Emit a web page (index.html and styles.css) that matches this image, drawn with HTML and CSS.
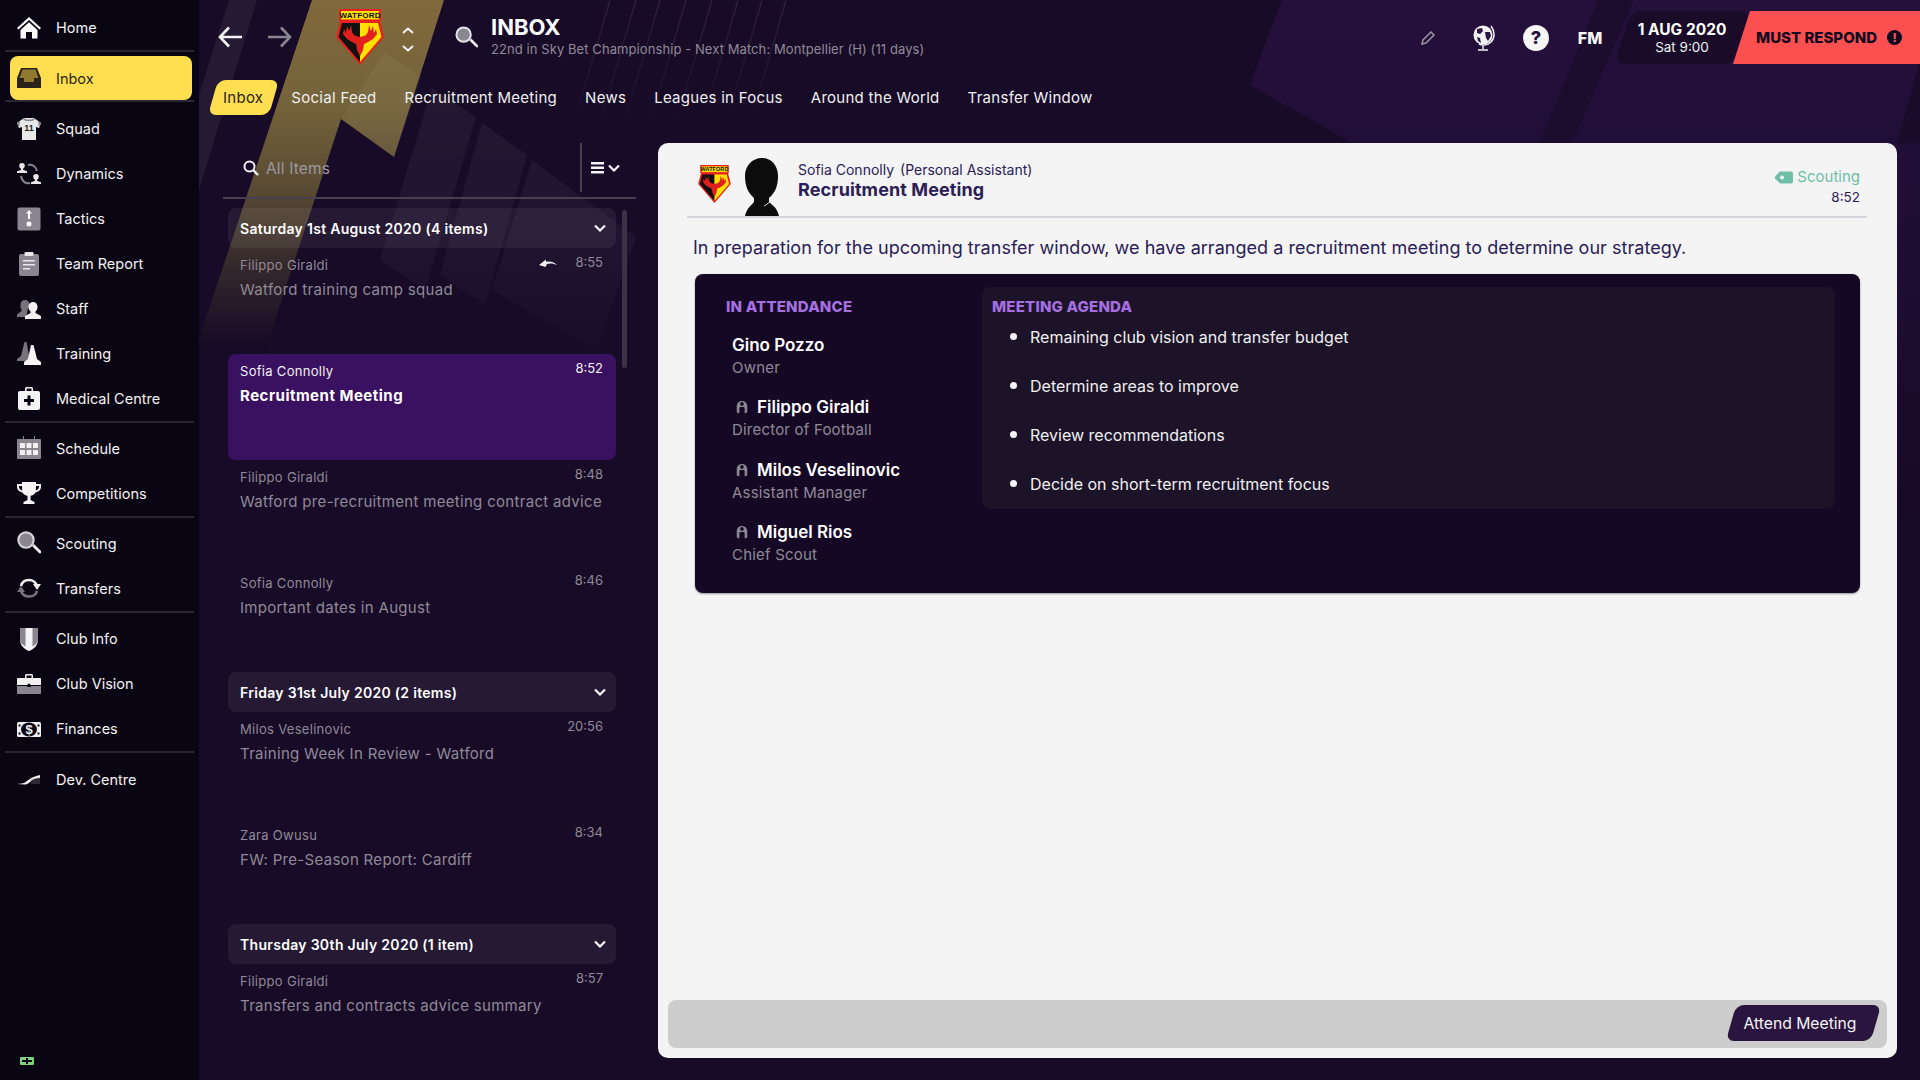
FILE: index.html
```html
<!DOCTYPE html>
<html lang="en">
<head>
<meta charset="utf-8">
<title>Inbox</title>
<link rel="stylesheet" href="styles.css">
</head>
<body>
<svg width="0" height="0" class="defs">
  <defs>
    <g id="crest">
      <path d="M3 0h42v12h-1l4 16-24 28L0 28l4-16H3z" fill="#e8201f"/>
      <rect x="5" y="2" width="38" height="8.500" fill="#ffe000"/>
      <text x="24" y="9.200" text-anchor="middle" class="crest-text">WATFORD</text>
      <path d="M24 14H6L2.500 28 24 53z" fill="#111"/>
      <path d="M24 14h18l3.500 14L24 53z" fill="#ffe000"/>
      <path d="M24 47L21 41 20 35 16 33 11 30 7 25 8 20 10 24 11 17 13 22 15 16 16 23 18 26 20 27 24 28 28 27 30 26 32 23 33 16 35 22 37 17 38 24 40 20 41 25 37 30 32 33 28 35 27 41z" fill="#e0201c"/>
    </g>
    <path id="person" d="M8 1c3.500 0 6 2.500 6 6v6c0 1-1 2-2 2h-1V9.500c0-1-.7-1.500-1.500-1.500h-3C5.700 8 5 8.500 5 9.500V15H4c-1 0-2-1-2-2V7c0-3.500 2.500-6 6-6zM6 4.500c0 1.200.9 2.200 2 2.200s2-1 2-2.200-.9-2.200-2-2.200-2 1-2 2.200z"/>
  </defs>
</svg>

<svg class="bg" viewBox="0 0 1920 1080" preserveAspectRatio="none">
  <defs>
    <linearGradient id="gold" gradientUnits="userSpaceOnUse" x1="0" y1="0" x2="0" y2="345">
      <stop offset="0" stop-color="#80693c"/>
      <stop offset=".3" stop-color="#75633a"/>
      <stop offset=".55" stop-color="#594a33"/>
      <stop offset=".75" stop-color="#382b2c"/>
      <stop offset="1" stop-color="#170a26"/>
    </linearGradient>
    <linearGradient id="fade" gradientUnits="userSpaceOnUse" x1="0" y1="80" x2="0" y2="380">
      <stop offset="0" stop-color="#fff" stop-opacity=".05"/>
      <stop offset=".55" stop-color="#fff" stop-opacity=".035"/>
      <stop offset="1" stop-color="#fff" stop-opacity="0"/>
    </linearGradient>
    <linearGradient id="glow" gradientUnits="userSpaceOnUse" x1="0" y1="0" x2="0" y2="520">
      <stop offset="0" stop-color="#25103c"/>
      <stop offset=".3" stop-color="#210e36"/>
      <stop offset="1" stop-color="#170a26"/>
    </linearGradient>
    <linearGradient id="lines" gradientUnits="userSpaceOnUse" x1="0" y1="0" x2="0" y2="130">
      <stop offset="0" stop-color="#36263f" stop-opacity=".9"/>
      <stop offset="1" stop-color="#36263f" stop-opacity="0"/>
    </linearGradient>
  </defs>
  <rect width="1920" height="1080" fill="#180b28"/>
  <path d="M1282 0H1920V520H1600L1352 143 1250 85z" fill="url(#glow)"/>
  <path d="M1598 0H1634L1572 143 1540 143z" fill="#1c0c2e"/>
  <path d="M1920 60V143H1897z" fill="#1a0b2a"/>
  <path d="M229 0H257L199 190V95z" fill="#fff" opacity=".06"/>
  <path d="M312 0H444L394 157 341 119 262 360H192z" fill="url(#gold)"/>
  <path d="M384 52L422 77 394 157 341 119z" fill="#fff" opacity=".04"/>
  <path d="M432 88L476 117 425 290 380 260z" fill="url(#fade)"/>
  <path d="M482 123L527 155 485 305 440 275z" fill="url(#fade)"/>
  <path d="M532 160L636 237 596 350 492 290z" fill="url(#fade)"/>
  <path stroke="url(#lines)" stroke-width="1.200" fill="none" d="M610 0L572 130M636 0L598 130M660 0L622 130M686 0L648 130M712 0L674 130M738 0L700 130M762 0L724 130M786 0L748 130"/>
</svg>

<div class="app">
  <aside class="sidebar">
    <div class="nav-group nav-home">
      <a class="nav-item"><svg class="ni" viewBox="0 0 24 24"><path fill="#fff" d="M12 1L0 12l1.500 1.500L12 4l10.500 9.500L24 12zM3.500 14L12 6.200 20.500 14v8.500h-5.500v-6.500H9v6.500H3.500z"/></svg><span>Home</span></a>
    </div>
    <div class="nav-group nav-inbox">
      <a class="nav-item active"><svg class="ni" viewBox="0 0 24 24"><path fill="#2a2418" d="M4 2h16l4 10v10H0V12z"/><path fill="#8f7a30" d="M5.500 3.500h13L21.500 12H17v4H7v-4H2.500z"/></svg><span>Inbox</span></a>
    </div>
    <div class="nav-group nav-squad">
      <a class="nav-item"><svg class="ni" viewBox="0 0 24 24"><path fill="#e8e8e8" d="M7 1h10l7 5-2 5-3-1v13H5V10l-3 1-2-5z"/><path fill="#8a8690" d="M7 1c1 2 9 2 10 0l1 1c-1 3-11 3-12 0zM0 6l3-2-1 7zM24 6l-3-2 1 7z"/><text x="12" y="14" text-anchor="middle" class="shirt-text">11</text></svg><span>Squad</span></a>
      <a class="nav-item"><svg class="ni" viewBox="0 0 24 24"><path fill="#e8e8e8" d="M5 1a2.800 2.800 0 012.800 2.800c0 1.500-1 2.700-1.800 3v1l4 1.500v1.700H0v-1.700L4 8V6.800c-.8-.3-1.800-1.500-1.800-3A2.800 2.800 0 015 1zM19 12a2.800 2.800 0 012.800 2.800c0 1.500-1 2.700-1.800 3v1l4 1.500V22H14v-1.700l4-1.500v-1c-.8-.3-1.800-1.500-1.800-3A2.800 2.800 0 0119 12z"/><path fill="none" stroke="#8a8690" stroke-width="2" d="M11 3c4-1 8 1 9 6M13 21c-4 1-8-1-9-7"/></svg><span>Dynamics</span></a>
      <a class="nav-item"><svg class="ni" viewBox="0 0 24 24"><rect width="23" height="23" x=".5" y=".5" rx="2" fill="#8a8690"/><path fill="#fff" d="M12 3l3 3.500h-2V12h-2V6.500H9zM12 14.500a2.500 2.500 0 110 5 2.500 2.500 0 010-5z"/></svg><span>Tactics</span></a>
      <a class="nav-item"><svg class="ni" viewBox="0 0 24 24"><rect width="20" height="22" x="2" y="2" rx="2" fill="#8a8690"/><rect x="7.500" y="0" width="9" height="4" rx="1" fill="#e8e8e8"/><path fill="#e8e8e8" d="M6 8h12v1.600H6zM6 12h12v1.600H6zM6 16h7v1.600H6z"/></svg><span>Team Report</span></a>
      <a class="nav-item"><svg class="ni" viewBox="0 0 24 24"><path fill="#77737d" d="M8 3a4.500 4.500 0 014.500 5c0 2-1 3.500-2 4.500v1.500L9 20H0v-2.500L4.500 14v-1.500C3.500 11.500 3.500 10 3.500 8A4.500 4.500 0 018 3z"/><path fill="#f0f0f0" d="M16 5a4.500 4.500 0 014.500 5c0 2-1 3.500-2 4.500V16l5.500 3v3H8v-3l5.500-3v-1.500c-1-1-2-2.500-2-4.500A4.500 4.500 0 0116 5z"/></svg><span>Staff</span></a>
      <a class="nav-item"><svg class="ni" viewBox="0 0 24 24"><path fill="#77737d" d="M7.500 0h2L13 19H0v-2l4-3z"/><path fill="#f4f4f4" d="M14 3h2.500L20 17l4 3v3H7v-3l4-3z"/></svg><span>Training</span></a>
      <a class="nav-item"><svg class="ni" viewBox="0 0 24 24"><path fill="#f4f4f4" d="M8 4V1.500C8 .7 8.700 0 9.500 0h5c.8 0 1.500.7 1.500 1.500V4h5c1.200 0 2 .8 2 2v15c0 1.200-.8 2-2 2H3c-1.200 0-2-.8-2-2V6c0-1.200.8-2 2-2zm1.500 0h5V1.500h-5z"/><path fill="#0a0512" d="M10.500 8.500h3v3.500H17v3h-3.500v3.500h-3V15H7v-3h3.500z"/></svg><span>Medical Centre</span></a>
    </div>
    <div class="nav-group">
      <a class="nav-item"><svg class="ni" viewBox="0 0 24 24"><path fill="#8a8690" d="M1 3h5V0h1v3h10V0h1v3h5c.5 0 1 .5 1 1v18c0 .5-.5 1-1 1H1c-.5 0-1-.5-1-1V4c0-.5.5-1 1-1z"/><path fill="#f0f0f0" d="M3 7h5v5H3zM9.500 7h5v5h-5zM16 7h5v5h-5zM3 14h5v5H3zM9.500 14h5v5h-5zM16 14h5v5h-5z"/></svg><span>Schedule</span></a>
      <a class="nav-item"><svg class="ni" viewBox="0 0 24 24"><path fill="#f4f4f4" d="M5 1h14v2h5v3c0 3-3 5-5.500 5.500-1 1.800-3 3-5 3.300V19l4 2v2H6.500v-2l4-2v-4.200c-2-.3-4-1.500-5-3.300C3 11 0 9 0 6V3h5zM2 5v1c0 1.700 1.500 3 3.200 3.500L5 5zm20 0h-3l-.2 4.500C20.500 9 22 7.700 22 6z"/></svg><span>Competitions</span></a>
    </div>
    <div class="nav-group">
      <a class="nav-item"><svg class="ni" viewBox="0 0 24 24"><path fill="#f0f0f0" d="M15 15l2-2 7 7c.5.6.5 1.500 0 2s-1.500.5-2 0z"/><circle cx="9" cy="9" r="7.700" fill="#8a8690" stroke="#d8d6da" stroke-width="2"/></svg><span>Scouting</span></a>
      <a class="nav-item"><svg class="ni" viewBox="0 0 24 24"><path fill="none" stroke="#f0f0f0" stroke-width="2.600" d="M4 10c1-4 4-6 8-6 4 0 7 3 8 6"/><path fill="#f0f0f0" d="M24 8l-4 6-4-6z"/><path fill="none" stroke="#77737d" stroke-width="2.600" d="M20 15c-1 4-4 5.500-8 5.500s-7-2.500-8-5.500"/><path fill="#77737d" d="M0 16l4-6 4 6z"/></svg><span>Transfers</span></a>
    </div>
    <div class="nav-group">
      <a class="nav-item"><svg class="ni" viewBox="0 0 24 24"><path fill="#f4f4f4" d="M3 1h18v12c0 5-4 9-9 11-5-2-9-6-9-11z"/><path fill="#8a8690" d="M3 1h5.500v18.500C5 17.500 3 15.500 3 13zM21 1h-5.500v18.500c3.500-2 5.500-4 5.500-6.500z"/></svg><span>Club Info</span></a>
      <a class="nav-item"><svg class="ni" viewBox="0 0 24 24"><path fill="#f0f0f0" d="M1 6h7V3.500C8 2.700 8.700 2 9.500 2h5c.8 0 1.500.7 1.500 1.500V6h7c.5 0 1 .5 1 1v6H0V7c0-.5.5-1 1-1zM9.500 6h5V3.500h-5z"/><path fill="#8a8690" d="M0 14h10v1h4v-1h10v7c0 .5-.5 1-1 1H1c-.5 0-1-.5-1-1z"/><circle cx="12" cy="13" r="1.500" fill="#0a0512"/></svg><span>Club Vision</span></a>
      <a class="nav-item"><svg class="ni" viewBox="0 0 24 24"><rect y="5" width="24" height="15" rx="1.500" fill="#f0f0f0"/><ellipse cx="12" cy="12.500" rx="8" ry="7" fill="#0a0512"/><path fill="#0a0512" d="M1.500 7.500h2v2h-2zM1.500 15.500h2v2h-2zM20.500 7.500h2v2h-2zM20.500 15.500h2v2h-2z"/><text x="12" y="17" text-anchor="middle" class="money-text">$</text></svg><span>Finances</span></a>
    </div>
    <div class="nav-group nav-last">
      <a class="nav-item"><svg class="ni" viewBox="0 0 24 24"><path fill="#f0f0f0" d="M0 17c5-.5 7-.5 10-3 2-1.700 5-4 13-6v3c-7 .5-9 3-11 5-1 .8-3 1.500-4.500 1.600z"/><path fill="#6e6a74" d="M14 12c3-1 6-1.500 9-1.500V17h-9z" opacity=".35"/></svg><span>Dev. Centre</span></a>
    </div>
    <div class="plug"><svg width="14" height="8" viewBox="0 0 14 8"><rect width="14" height="8" fill="#7fd07f" rx="1"/><path fill="#0a0512" d="M6 1h2v6H6zM8 3h4v2H8zM2 3h4v2H2z"/></svg></div>
  </aside>

  <main class="main">
    <header class="topbar">
      <svg class="arrow" viewBox="0 0 24 22"><path fill="none" stroke="#f4f4f4" stroke-width="2.600" d="M11 1.500L2 11l9 9.500M2.500 11H24"/></svg>
      <svg class="arrow arrow-off" viewBox="0 0 24 22"><path fill="none" stroke="#8a8690" stroke-width="2.600" d="M13 1.500L22 11l-9 9.500M21.500 11H0"/></svg>
      <svg class="crest-big" viewBox="0 0 48 56"><use href="#crest"/></svg>
      <div class="updown">
        <svg viewBox="0 0 12 7"><path fill="none" stroke="#f4f4f4" stroke-width="2" d="M1 6l5-4.500L11 6"/></svg>
        <svg viewBox="0 0 12 7"><path fill="none" stroke="#f4f4f4" stroke-width="2" d="M1 1l5 4.500L11 1"/></svg>
      </div>
      <svg class="top-search" viewBox="0 0 24 24"><path fill="#f0f0f0" d="M15 15l2-2 7 7c.5.6.5 1.500 0 2s-1.500.5-2 0z"/><circle cx="9" cy="9" r="7.500" fill="#8a8690" stroke="#e4e2e6" stroke-width="2"/></svg>
      <div class="title-block">
        <h1>INBOX</h1>
        <p>22nd in Sky Bet Championship - Next Match: Montpellier (H) (11 days)</p>
      </div>
      <div class="tools">
        <svg class="tool tool-pen" viewBox="0 0 16 16"><path fill="none" stroke="#9a96a0" stroke-width="1.500" d="M2 14l1-4 8-8 3 3-8 8z"/></svg>
        <svg class="tool tool-globe" viewBox="0 0 24 26"><circle cx="11" cy="10" r="9.500" fill="#f2f2f2"/><path fill="#2a1540" d="M5 4l5-1 1 3-3 3-3-1zM13 7l5 0 1 4-3 5-2-3zM5 12l3 1 1 5-3-2z"/><path fill="none" stroke="#f2f2f2" stroke-width="1.500" d="M19 1c4 5 4 12 0 16-3 3-8 4-12 2M11 21v3M6 25h10"/></svg>
        <div class="tool tool-help">?</div>
        <div class="tool tool-fm">FM</div>
      </div>
      <div class="date"><strong>1 AUG 2020</strong><span>Sat 9:00</span></div>
      <div class="respond"><span>MUST RESPOND</span><i>!</i></div>
    </header>

    <nav class="tabs">
      <a class="tab active">Inbox</a>
      <a class="tab">Social Feed</a>
      <a class="tab">Recruitment Meeting</a>
      <a class="tab">News</a>
      <a class="tab">Leagues in Focus</a>
      <a class="tab">Around the World</a>
      <a class="tab">Transfer Window</a>
    </nav>

    <div class="content">
      <section class="list">
        <div class="filter">
          <svg class="filter-search" viewBox="0 0 16 16"><circle cx="6.500" cy="6.500" r="5" fill="none" stroke="#f0f0f0" stroke-width="2"/><path stroke="#f0f0f0" stroke-width="2.400" d="M10 10l5 5"/></svg>
          <span class="filter-label">All Items</span>
          <div class="filter-menu">
            <svg width="14" height="12" viewBox="0 0 14 12"><path fill="#f4f4f4" d="M0 0h13v2.500H0zM0 4.500h13V7H0zM0 9h13v2.500H0z"/></svg>
            <svg class="chev" viewBox="0 0 12 8"><path fill="none" stroke="#f4f4f4" stroke-width="2.200" d="M1 1.500l5 5 5-5"/></svg>
          </div>
        </div>
        <div class="list-scroll">
          <div class="items">
            <div class="group-head"><span>Saturday 1st August 2020 (4 items)</span><svg class="chev" viewBox="0 0 12 8"><path fill="none" stroke="#f4f4f4" stroke-width="2.200" d="M1 1.500l5 5 5-5"/></svg></div>
            <div class="item">
              <div class="item-top"><span class="from">Filippo Giraldi</span><svg class="reply" viewBox="0 0 18 10"><path fill="#f0f0f0" d="M0 7l7-5.500v2.300c4-.8 8 .2 11 3.200-3-1.500-6.500-2-10-1L6.500 9z"/></svg><span class="time">8:55</span></div>
              <div class="subject">Watford training camp squad</div>
            </div>
            <div class="item selected">
              <div class="item-top"><span class="from">Sofia Connolly</span><span class="time">8:52</span></div>
              <div class="subject">Recruitment Meeting</div>
            </div>
            <div class="item">
              <div class="item-top"><span class="from">Filippo Giraldi</span><span class="time">8:48</span></div>
              <div class="subject">Watford pre-recruitment meeting contract advice</div>
            </div>
            <div class="item">
              <div class="item-top"><span class="from">Sofia Connolly</span><span class="time">8:46</span></div>
              <div class="subject">Important dates in August</div>
            </div>
            <div class="group-head"><span>Friday 31st July 2020 (2 items)</span><svg class="chev" viewBox="0 0 12 8"><path fill="none" stroke="#f4f4f4" stroke-width="2.200" d="M1 1.500l5 5 5-5"/></svg></div>
            <div class="item">
              <div class="item-top"><span class="from">Milos Veselinovic</span><span class="time">20:56</span></div>
              <div class="subject">Training Week In Review - Watford</div>
            </div>
            <div class="item">
              <div class="item-top"><span class="from">Zara Owusu</span><span class="time">8:34</span></div>
              <div class="subject">FW: Pre-Season Report: Cardiff</div>
            </div>
            <div class="group-head"><span>Thursday 30th July 2020 (1 item)</span><svg class="chev" viewBox="0 0 12 8"><path fill="none" stroke="#f4f4f4" stroke-width="2.200" d="M1 1.500l5 5 5-5"/></svg></div>
            <div class="item">
              <div class="item-top"><span class="from">Filippo Giraldi</span><span class="time">8:57</span></div>
              <div class="subject">Transfers and contracts advice summary</div>
            </div>
          </div>
          <div class="scrollbar"></div>
        </div>
      </section>

      <article class="panel">
        <div class="panel-main">
          <header class="panel-head">
            <svg class="crest-small" viewBox="0 0 48 56"><use href="#crest"/></svg>
            <svg class="portrait" viewBox="0 0 41 58"><path fill="#0c0c0c" d="M20 0c10 0 16 8 16 18 0 10-3 17-9 22v4c3 3 8 5 10 14H3c2-9 7-11 9-14v-4C6 35 3 28 3 18 3 8 10 0 20 0z"/><path fill="none" stroke="#ddd" stroke-width="1" d="M30 44c-3-1-5 3-8 4"/></svg>
            <div class="sender">
              <div class="sender-name"><span>Sofia Connolly</span><span>(Personal Assistant)</span></div>
              <h2>Recruitment Meeting</h2>
            </div>
            <div class="meta">
              <div class="tag"><svg width="18" height="13" viewBox="0 0 18 12"><path fill="#6fbfa8" d="M5 0h11c1 0 2 1 2 2v8c0 1-1 2-2 2H5L0 7V5z"/><circle cx="7" cy="6" r="2" fill="#f4f4f4"/></svg><span>Scouting</span></div>
              <div class="meta-time">8:52</div>
            </div>
          </header>
          <p class="intro">In preparation for the upcoming transfer window, we have arranged a recruitment meeting to determine our strategy.</p>
          <div class="card">
            <div class="attend">
              <h3>IN ATTENDANCE</h3>
              <div class="person"><div class="pname">Gino Pozzo</div><div class="prole">Owner</div></div>
              <div class="person"><div class="pname"><svg viewBox="0 0 16 16" class="picon"><use href="#person"/></svg>Filippo Giraldi</div><div class="prole">Director of Football</div></div>
              <div class="person"><div class="pname"><svg viewBox="0 0 16 16" class="picon"><use href="#person"/></svg>Milos Veselinovic</div><div class="prole">Assistant Manager</div></div>
              <div class="person"><div class="pname"><svg viewBox="0 0 16 16" class="picon"><use href="#person"/></svg>Miguel Rios</div><div class="prole">Chief Scout</div></div>
            </div>
            <div class="agenda">
              <h3>MEETING AGENDA</h3>
              <ul>
                <li>Remaining club vision and transfer budget</li>
                <li>Determine areas to improve</li>
                <li>Review recommendations</li>
                <li>Decide on short-term recruitment focus</li>
              </ul>
            </div>
          </div>
        </div>
        <footer class="action-bar"><button class="attend-btn"><span>Attend Meeting</span></button></footer>
      </article>
    </div>
  </main>
</div>
</body>
</html>
```

FILE: styles.css
```css
* { box-sizing: border-box; }
html, body { margin: 0; padding: 0; height: 100%; }
body { font-family: "Inter", "Liberation Sans", sans-serif; color: #f4f4f4; background: #170a26; overflow: hidden; position: relative; width: 1920px; height: 1080px; }
.defs { position: absolute; }
.bg { position: absolute; left: 0; top: 0; width: 1920px; height: 1080px; }
.crest-text { font: 700 8px "Liberation Sans", sans-serif; fill: #111; letter-spacing: .2px; }
.shirt-text { font: 700 9px "Liberation Sans Narrow", "Liberation Sans", sans-serif; fill: #222; }
.money-text { font: 700 13px "Liberation Sans", sans-serif; fill: #f0f0f0; }

.app { position: relative; display: flex; width: 1920px; height: 1080px; }

/* sidebar */
.sidebar { width: 199px; height: 1080px; background: #0a0512; display: flex; flex-direction: column; padding: 0 5px; position: relative; }
.nav-group { padding-top: 3.3px; border-bottom: 2px solid #2b2732; }
.nav-home { padding-top: 5px; height: 52px; }
.nav-inbox { height: 50px; padding-top: 4px; }
.nav-squad { padding-top: 4px; margin-bottom: -.7px; }
.nav-last { border-bottom: 0; }
.nav-item { display: flex; align-items: center; height: 45px; font-size: 14.5px; color: #f2f2f2; padding-left: 12px; gap: 15px; }
.nav-item.active { height: 44px; margin: 0 2px 0 5px; padding-left: 7px; background: #ffdf50; color: #2a2418; border-radius: 8px; }
.ni { width: 24px; height: 24px; flex: none; }
.plug { margin-top: auto; padding: 0 0 15px 15px; display: flex; }

/* main */
.main { flex: 1; min-width: 0; display: flex; flex-direction: column; }
.topbar { height: 75px; display: flex; align-items: flex-start; padding-top: 11px; }
.arrow { width: 24px; height: 22px; margin: 15px 0 0 19px; flex: none; }
.arrow-off { margin-left: 26px; }
.crest-big { width: 48px; height: 56px; margin: -2px 0 0 44px; flex: none; }
.updown { margin: 16px 0 0 18px; width: 12px; display: flex; flex-direction: column; gap: 11px; }
.updown svg { width: 12px; height: 7px; display: block; }
.top-search { width: 23px; height: 23px; margin: 15px 0 0 41px; flex: none; }
.title-block { margin: 3px 0 0 13px; }
.title-block h1 { margin: 0; font-size: 22px; line-height: 26px; font-weight: 700; color: #fff; }
.title-block p { margin: 0; font-size: 13px; line-height: 18px; color: #8f8a96; letter-spacing: .08px; }
.tools { margin-left: auto; display: flex; align-items: center; height: 53px; }
.tool { flex: none; }
.tool-pen { width: 16px; height: 16px; margin-right: 36px; }
.tool-globe { width: 24px; height: 26px; margin-right: 27px; }
.tool-help { width: 26px; height: 26px; border-radius: 50%; background: #f6f6f6; color: #25103c; font-size: 18px; font-weight: 800; line-height: 26px; text-align: center; margin-right: 28px; }
.tool-fm { font-size: 16px; font-weight: 800; color: #f6f6f6; width: 26px; margin-right: 20px; text-align: center; }
.date { position: relative; width: 118px; height: 53px; display: flex; flex-direction: column; align-items: center; justify-content: center; flex: none; isolation: isolate; margin-right: -8px; }
.date::before { content: ""; position: absolute; inset: 0; background: #1a0b29; border-radius: 10px; transform: skewX(-18deg); z-index: -1; }
.date strong { font-size: 15.5px; line-height: 19px; font-weight: 700; color: #fff; }
.date span { font-size: 13.5px; line-height: 17px; color: #f0f0f0; }
.respond { position: relative; width: 187px; height: 53px; flex: none; background: #fc5050; clip-path: polygon(17px 0, 100% 0, 100% 100%, 0 100%); display: flex; align-items: center; padding-left: 23px; color: #14081f; font-size: 15px; font-weight: 800; }
.respond i { font-style: normal; width: 15px; height: 15px; border-radius: 50%; background: #14081f; color: #fc5050; font-size: 12px; line-height: 15px; text-align: center; margin-left: 10px; }

.tabs { display: flex; height: 35px; align-items: center; margin-top: 5px; padding-left: 24px; gap: 28px; }
.tab { position: relative; font-size: 15px; letter-spacing: .28px; color: #f0f0f0; line-height: 35px; white-space: nowrap; isolation: isolate; }
.tab.active { color: #2a2418; }
.tab.active::before { content: ""; position: absolute; top: 0; bottom: 0; left: -10px; right: -11px; background: #ffdf50; border-radius: 8px; transform: skewX(-16deg); z-index: -1; }

.content { display: flex; margin-top: 28px; padding: 0 23px 0 24px; gap: 22px; height: 915px; }

/* message list */
.list { width: 413px; flex: none; display: flex; flex-direction: column; height: 937px; }
.filter { height: 56px; border-bottom: 2px solid #49404f; display: flex; align-items: center; padding: 0 0 4px 20px; flex: none; position: relative; }
.filter-search { width: 16px; height: 16px; margin-right: 7px; }
.filter-label { font-size: 15.5px; letter-spacing: .15px; color: #9d98a3; }
.filter-menu { margin-left: auto; align-self: flex-start; height: 49px; width: 56px; border-left: 2px solid #49404f; display: flex; align-items: center; padding-left: 9px; gap: 3px; }
.chev { width: 12px; height: 8px; flex: none; }
.list-scroll { position: relative; padding: 9px 20px 0 5px; flex: 1; min-height: 0; overflow: hidden; }
.items { display: flex; flex-direction: column; }
.scrollbar { position: absolute; left: 399px; top: 11px; width: 5px; height: 158px; border-radius: 3px; background: #3b3247; }
.group-head { height: 40px; flex: none; display: flex; align-items: center; justify-content: space-between; padding: 0 10px 0 12px; background: rgba(255,255,255,.06); border-radius: 8px; font-size: 14px; letter-spacing: .3px; font-weight: 600; color: #fff; }
.item { height: 106px; flex: none; padding: 5px 13px 0 12px; border-radius: 8px; }
.item-top { display: flex; align-items: flex-start; height: 20px; }
.from { font-size: 13px; letter-spacing: .3px; line-height: 20px; color: #8f8a96; margin-top: 2px; }
.reply { width: 18px; height: 10px; margin: 5px 18px 0 auto; flex: none; }
.time { font-size: 13px; line-height: 18px; color: #8f8a96; margin-left: auto; }
.reply + .time { margin-left: 0; }
.subject { font-size: 15px; letter-spacing: .31px; line-height: 20px; color: #8f8a96; margin-top: 6.5px; white-space: nowrap; }
.selected { background: #3a1160; }
.selected .from, .selected .time { color: #f0f0f0; }
.selected .subject { color: #fff; font-weight: 700; letter-spacing: .5px; }

/* reading panel */
.panel { width: 1239px; flex: none; height: 915px; background: #f4f4f4; border-radius: 10px; display: flex; flex-direction: column; }
.panel-main { flex: 1; min-height: 0; padding: 0 30px 0 29px; }
.panel-head { height: 75px; border-bottom: 2px solid #d5d3db; display: flex; align-items: flex-start; color: #2a2055; }
.crest-small { width: 33px; height: 38px; margin: 22px 0 0 11px; flex: none; }
.portrait { width: 41px; height: 58px; margin: 15px 0 0 11px; flex: none; }
.sender { margin: 17px 0 0 15px; }
.sender-name { font-size: 14px; line-height: 20px; display: flex; gap: 6px; }
.sender h2 { margin: 0; font-size: 18px; letter-spacing: .1px; line-height: 20px; font-weight: 700; }
.meta { margin-left: auto; padding: 24px 7px 0 0; text-align: right; }
.tag { display: flex; align-items: center; gap: 4px; color: #6fbfa8; font-size: 15px; line-height: 20px; }
.meta-time { font-size: 13.5px; line-height: 21px; color: #2a2055; }
.intro { margin: 0; padding: 18px 0 0 6px; font-size: 18px; letter-spacing: .03px; line-height: 24px; color: #2a2055; height: 56px; white-space: nowrap; }
.card { margin: 0 7px 0 8px; height: 319px; background: #150824; border-radius: 8px; box-shadow: 0 1px 2px rgba(0,0,0,.4); display: flex; align-items: flex-start; }
.card h3 { margin: 0; font-size: 15px; letter-spacing: .2px; font-weight: 800; color: #a56fe0; }
.attend { width: 287px; padding: 24px 0 0 31px; flex: none; }
.attend h3 { line-height: 18px; margin-bottom: 16px; }
.person { height: 62.4px; padding-left: 6px; }
.pname { display: flex; align-items: center; font-size: 17px; line-height: 26px; font-weight: 600; color: #fff; }
.picon { width: 14px; height: 14px; fill: #8a8690; margin: 0 8px 0 3px; }
.prole { font-size: 15px; letter-spacing: .2px; line-height: 20px; color: #8f8a96; }
.agenda { margin: 13px 25px 0 0; flex: 1; height: 222px; background: #1c1329; border-radius: 8px; padding: 12px 0 0 10px; }
.agenda h3 { line-height: 15px; }
.agenda ul { list-style: none; margin: -2px 0 0; padding: 0 0 0 18px; }
.agenda li { display: flex; align-items: center; height: 49px; gap: 13px; font-size: 16px; color: #f0f0f0; }
.agenda li::before { content: ""; width: 7px; height: 7px; border-radius: 50%; background: #f4f4f4; flex: none; }
.action-bar { height: 48px; margin: 0 10px 10px; background: #cdcdcd; border-radius: 8px; display: flex; justify-content: flex-end; padding: 5px 11px 0 0; flex: none; }
.attend-btn { position: relative; width: 145px; height: 36px; border: 0; background: none; padding: 0 7px 0 0; color: #f4f4f4; font: 400 15.7px "Inter", "Liberation Sans", sans-serif; isolation: isolate; }
.attend-btn::before { content: ""; position: absolute; inset: 0; background: #2a1540; border-radius: 8px; transform: skewX(-16deg); z-index: -1; }
```
